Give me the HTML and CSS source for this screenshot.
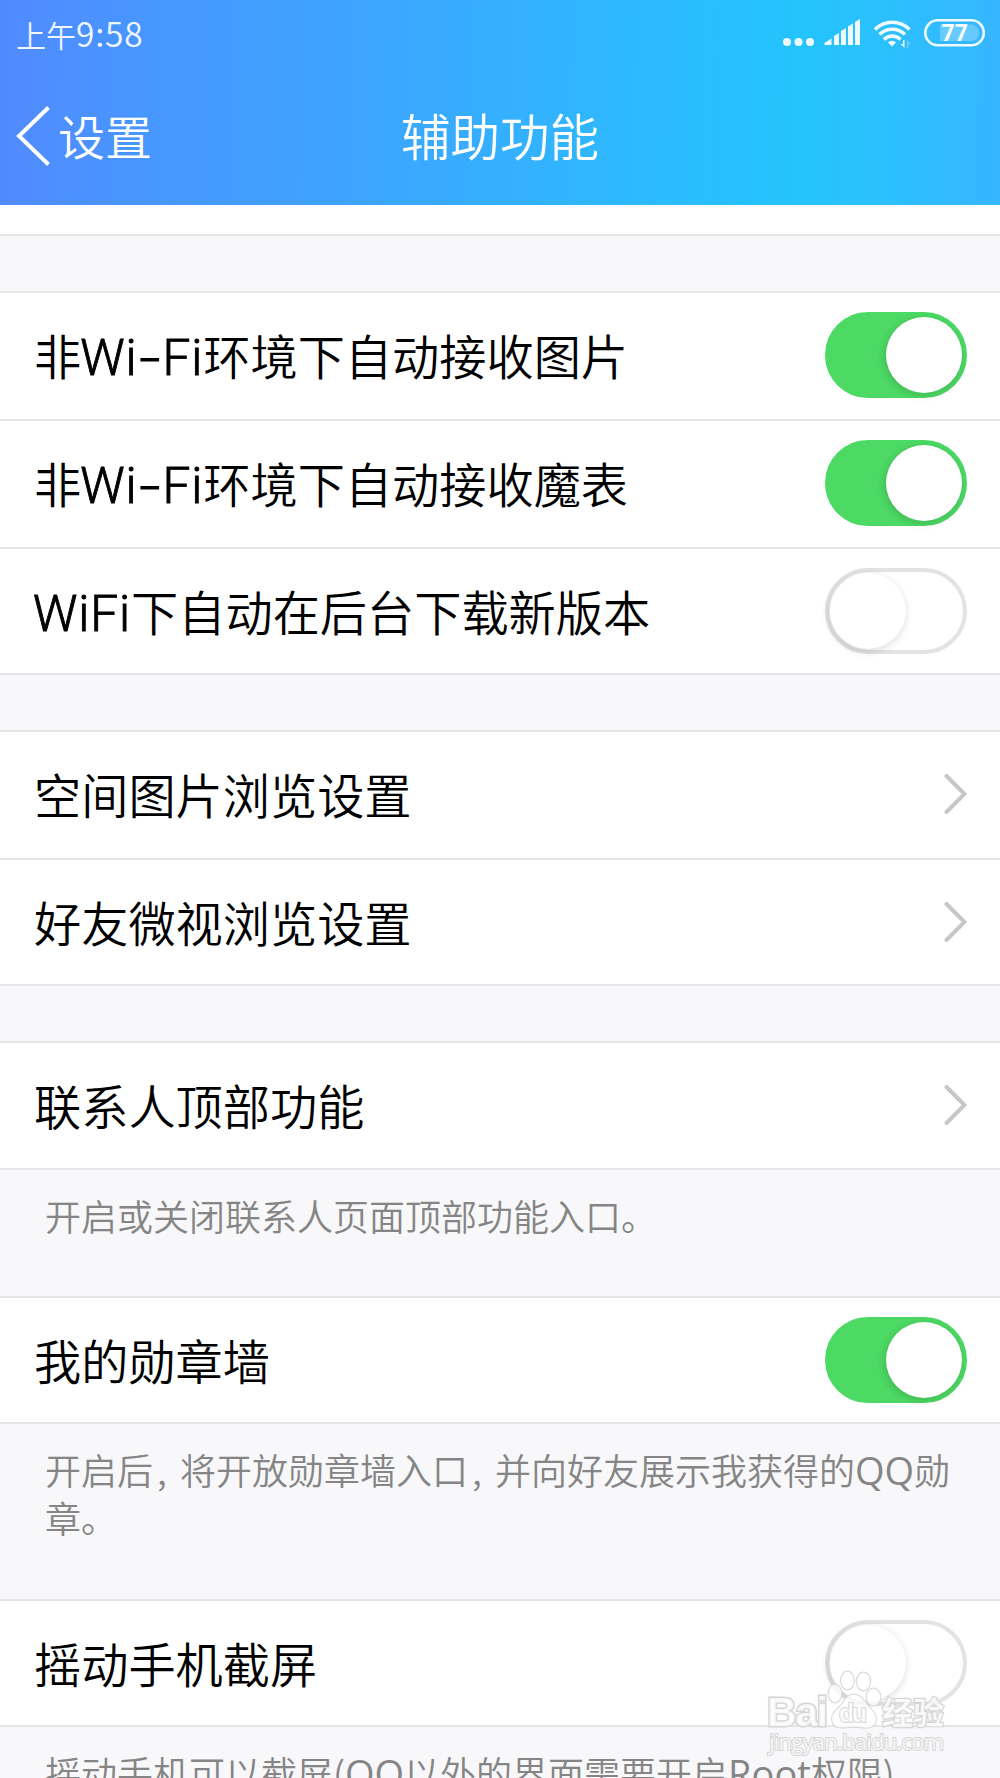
FILE: index.html
```
<!DOCTYPE html>
<html lang="zh-CN">
<head>
    <meta charset="UTF-8">
    <meta name="viewport" content="width=device-width, initial-scale=1.0">
    <title>辅助功能</title>
    <link rel="stylesheet" href="styles.css">
</head>
<body>
    <!-- Header -->
    <header class="header">
        <div class="status-bar">
            <span class="time">上午<span class="digits">9:58</span></span>
            <svg class="status-icons" width="206" height="34" viewBox="782 17 206 34">
                <g fill="#fff" fill-opacity="0.92">
                    <circle cx="787" cy="42" r="4"/>
                    <circle cx="798.5" cy="42" r="4"/>
                    <circle cx="810" cy="42" r="4"/>
                    <path d="M824.5 45v-2l7-4.500v6.500zM834 45V36l5-3v12zM841 45V31l5-3v17zM848 45V26.500l5-3v21.500zM855 45V22l5-3v26z"/>
                    <path d="M892 46.500l-4-4a5.500 5.500 0 0 1 8 0z"/>
                    <path d="M904.500 40v8l-4-4h2.500v-4z"/>
                    <path d="M907 48v-8l4 4h-2.500v4z" fill-opacity="0.3"/>
                    <path d="M940 24.500h31a8.300 8.300 0 0 1 0 16.600h-31z" fill-opacity="0.25"/>
                </g>
                <g fill="none" stroke="#fff" stroke-opacity="0.92" stroke-width="3.400">
                    <path d="M875 29.500a24 24 0 0 1 34.500 0"/>
                    <path d="M879.500 34.500a18 18 0 0 1 25.500 0"/>
                    <path d="M884 39.500a11.500 11.500 0 0 1 16.500 0"/>
                    <rect x="925.300" y="20.300" width="58.500" height="25" rx="12.500" stroke-width="2.600"/>
                </g>
                <text class="battery-text" x="941.500" y="41">77</text>
            </svg>
        </div>
        <nav class="nav-bar">
            <a class="back">
                <svg width="34" height="60" viewBox="0 0 34 60" fill="none" stroke="#fff" stroke-width="4">
                    <path d="M32.500 1.500L3 30l29.500 28.500"/>
                </svg>
                <span>设置</span>
            </a>
            <h1 class="title">辅助功能</h1>
        </nav>
    </header>

    <!-- Settings list -->
    <main class="settings">
        <div class="strip"></div>
        <div class="gap"></div>

        <div class="row">
            <span class="label mixed">非<span class="latin">Wi<i class="dash">-</i>Fi</span>环境下自动接收图片</span>
            <span class="toggle on"></span>
        </div>
        <div class="row">
            <span class="label mixed">非<span class="latin">Wi<i class="dash">-</i>Fi</span>环境下自动接收魔表</span>
            <span class="toggle on"></span>
        </div>
        <div class="row last">
            <span class="label mixed"><span class="latin">WiFi</span>下自动在后台下载新版本</span>
            <span class="toggle"></span>
        </div>
        <div class="gap"></div>

        <div class="row">
            <span class="label">空间图片浏览设置</span>
            <svg class="arrow" viewBox="0 0 24 40"><path d="M3.500 2l18 18-18 18"/></svg>
        </div>
        <div class="row last">
            <span class="label">好友微视浏览设置</span>
            <svg class="arrow" viewBox="0 0 24 40"><path d="M3.500 2l18 18-18 18"/></svg>
        </div>
        <div class="gap"></div>

        <div class="row single">
            <span class="label">联系人顶部功能</span>
            <svg class="arrow" viewBox="0 0 24 40"><path d="M3.500 2l18 18-18 18"/></svg>
        </div>
        <p class="note">开启或关闭联系人页面顶部功能入口。</p>

        <div class="row last">
            <span class="label">我的勋章墙</span>
            <span class="toggle on"></span>
        </div>
        <p class="note tall">开启后<span class="comma">,</span>将开放勋章墙入口<span class="comma">,</span>并向好友展示我获得的<span class="note-latin">QQ</span>勋章。</p>

        <div class="row last">
            <span class="label">摇动手机截屏</span>
            <span class="toggle"></span>
        </div>
        <p class="note">摇动手机可以截屏(<span class="note-latin">QQ</span>以外的界面需要开启<span class="note-latin">Root</span>权限)</p>
    </main>

    <!-- Watermark -->
    <svg class="watermark" width="200" height="100" viewBox="755 1665 200 100">
        <g class="mark">
            <ellipse cx="835" cy="1693.500" rx="6.500" ry="9"/>
            <ellipse cx="847.500" cy="1680.500" rx="6.500" ry="9"/>
            <ellipse cx="863.500" cy="1681.500" rx="6.800" ry="9"/>
            <ellipse cx="873.500" cy="1697" rx="7" ry="8.500"/>
            <path d="M854 1694.500c-8 0-10 8-15 13-5 4-7.500 8-7 12.500 1 7 7 8 12 7.500 7-1 13-1 20 0 6 .8 11.500-1 12-8 .3-5-3-8-6-11.500-5-5-8-13.500-16-13.500z"/>
            <text class="mark-brand" x="767" y="1726" textLength="61">Bai</text>
            <text class="mark-du" x="839" y="1722" textLength="28">du</text>
            <text class="mark-cn" x="882" y="1724">经验</text>
            <text class="mark-url" x="769" y="1750" textLength="175">jingyan.baidu.com</text>
        </g>
    </svg>
</body>
</html>
```
FILE: styles.css
```
/* ----- Variables ----- */
:root {
    --page-bg: #f8f8fb;
    --card-bg: #ffffff;
    --line-color: #e5e5e7;
    --text-color: #000000;
    --note-color: #858585;
    --green: #4cd964;
}

/* ----- Reset ----- */
* {
    margin: 0;
    padding: 0;
    box-sizing: border-box;
}

body {
    position: relative;
    height: 1778px;
    overflow: hidden;
    background: var(--page-bg);
    color: var(--text-color);
    font-family: "Noto Sans CJK SC", sans-serif;
    font-weight: 350;
}

/* ----- Header ----- */
.header {
    height: 205px;
    color: #fff;
    background: linear-gradient(91deg, #518aff 0%, #4896ff 14%, #3fa2ff 33%, #2fb7ff 60%, #24c4fe 80%, #2cbffe 89%, #37b6ff 100%);
}

.status-bar {
    display: flex;
    justify-content: space-between;
    align-items: center;
    height: 68px;
    padding: 0 12px 0 16px;
}

.time {
    font-size: 30px;
    line-height: 64px;
    padding-bottom: 2px;
    opacity: 0.92;
}

.digits {
    font-size: 33.5px;
    letter-spacing: 0.8px;
}

.battery-text {
    fill: #fff;
    font-family: Roboto, sans-serif;
    font-size: 23px;
    font-weight: 700;
}

.nav-bar {
    display: grid;
    grid-template-columns: 1fr auto 1fr;
    align-items: center;
    height: 136px;
    padding-left: 16px;
}

.back {
    display: flex;
    align-items: center;
    gap: 8px;
    font-size: 47px;
    line-height: 60px;
}

.back span {
    padding-bottom: 3px;
}

.title {
    margin-right: 16px;
    padding-bottom: 3px;
    font-size: 49.5px;
    font-weight: 350;
    line-height: 60px;
}

/* ----- Settings rows ----- */
.strip {
    height: 31px;
    background: var(--card-bg);
    border-bottom: 2px solid var(--line-color);
}

.gap {
    height: 57px;
    border-bottom: 2px solid var(--line-color);
}

.row {
    display: flex;
    justify-content: space-between;
    align-items: center;
    height: 128px;
    padding: 0 33px 2px 34px;
    background: var(--card-bg);
    border-bottom: 2px solid var(--line-color);
}

.row.last {
    height: 126px;
    padding-bottom: 0;
}

.row.single {
    height: 127px;
    padding-bottom: 1px;
}

.label {
    font-size: 47.2px;
    line-height: 60px;
    white-space: nowrap;
}

.label.mixed {
    padding-top: 2px;
}

.latin {
    margin-left: -1px;
    font-family: Roboto, sans-serif;
    font-size: 49.5px;
    font-weight: 300;
    letter-spacing: 0.9px;
    -webkit-text-stroke: 0.9px #000;
}

.dash {
    display: inline-block;
    font-style: normal;
    transform: scaleX(1.5);
    margin: 0 5px;
}

.arrow {
    width: 24px;
    height: 40px;
    fill: none;
    stroke: #c7c7c7;
    stroke-width: 4;
    stroke-linecap: round;
}

/* ----- Toggle ----- */
.toggle {
    display: flex;
    width: 142px;
    height: 86px;
    padding: 1px;
    border: 4px solid #e3e3e3;
    border-radius: 43px;
    background: #fff;
}

.toggle::before {
    content: '';
    width: 76px;
    height: 76px;
    border-radius: 50%;
    background: #fff;
    box-shadow: -1px 2px 8px rgba(0, 0, 0, 0.16);
}

.toggle.on {
    justify-content: flex-end;
    border-color: var(--green);
    background: var(--green);
}

/* ----- Notes ----- */
.note {
    height: 128px;
    padding: 21px 44px 0 45px;
    border-bottom: 2px solid var(--line-color);
    color: var(--note-color);
    font-size: 36px;
    line-height: 48px;
}

.note.tall {
    height: 177px;
}

.note-latin {
    font-family: "Open Sans", sans-serif;
    font-size: 38px;
    font-weight: 400;
    line-height: 1;
}

.comma {
    display: inline-block;
    width: 27px;
    padding-left: 4px;
}

/* ----- Watermark ----- */
.watermark {
    position: absolute;
    left: 755px;
    top: 1665px;
}

.mark {
    fill: #fff;
    fill-opacity: 0.8;
    stroke: #d6d6d6;
    stroke-width: 1.8;
    paint-order: stroke;
}

.mark-brand {
    font: 700 41px "Liberation Sans", sans-serif;
    stroke-width: 3;
}

.mark-du {
    font: 700 25px "Liberation Sans", sans-serif;
}

.mark-cn {
    font: 700 31px "Noto Sans CJK SC", sans-serif;
    stroke-width: 2.4;
}

.mark-url {
    font: 400 22px "Open Sans", sans-serif;
    stroke-width: 2;
}
```
